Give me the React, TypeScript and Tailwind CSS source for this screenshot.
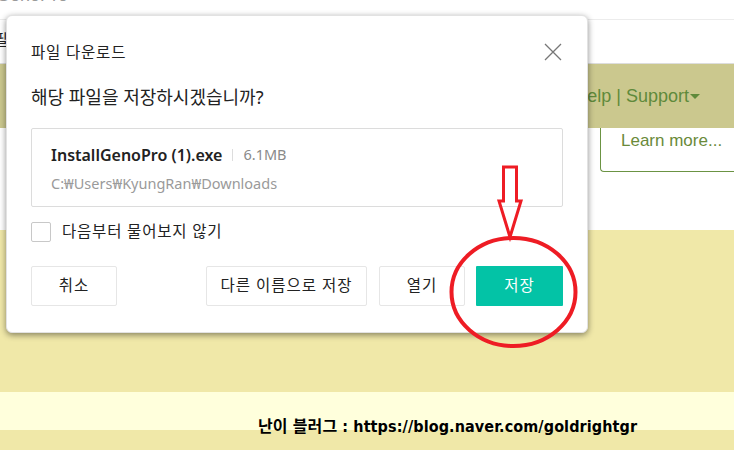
import React from "react";

const kr = { fontFamily: '"Noto Sans", "Noto Sans CJK KR", sans-serif' };

function Annotation() {
  return (
    <svg
      className="absolute left-0 top-0 pointer-events-none"
      width={734}
      height={450}
      viewBox="0 0 734 450"
    >
      <path
        d="M503.5 167 L516.5 167 L516.5 201 L521 201 L510 237 L499 201 L503.5 201 Z"
        fill="none"
        stroke="#ee1c24"
        strokeWidth={3}
        strokeLinejoin="miter"
      />
      <ellipse cx={513.5} cy={292} rx={62} ry={54} fill="none" stroke="#ee1c24" strokeWidth={4} />
    </svg>
  );
}

function DownloadDialog() {
  return (
    <div
      className="absolute left-[6px] top-[15px] w-[582px] h-[318px] bg-white rounded-[6px] border border-[#e2e2e2] shadow-[0_2px_6px_rgba(0,0,0,0.45)] px-[24px] pt-[26px] text-[#222]"
      style={kr}
    >
      <div className="flex items-center justify-between h-[20px]">
        <span className="text-[15.5px] leading-[20px] tracking-[0.8px]">파일 다운로드</span>
        <svg width={18} height={18} viewBox="0 0 18 18" className="mr-[1px]">
          <path d="M1 1 L17 17 M17 1 L1 17" stroke="#777" strokeWidth={1.3} />
        </svg>
      </div>
      <div className="mt-[22px] text-[18px] leading-[26px]">해당 파일을 저장하시겠습니까?</div>
      <div className="mt-[18px] h-[79px] border border-[#dcdcdc] rounded-[2px] px-[19px] pt-[16px]">
        <div className="flex items-center h-[20px]">
          <span className="text-[16px] font-semibold text-[#222]">InstallGenoPro (1).exe</span>
          <span className="mx-[10px] w-px h-[12px] bg-[#dddddd]" />
          <span className="text-[14.5px] text-[#8a8a8a]">6.1MB</span>
        </div>
        <div className="mt-[8px] text-[14.5px] leading-[20px] text-[#9a9a9a]">
          C:₩Users₩KyungRan₩Downloads
        </div>
      </div>
      <div className="mt-[15px] flex items-center h-[20px]">
        <span className="w-[20px] h-[20px] border border-[#c8c8c8] rounded-[2px] bg-white" />
        <span className="ml-[11px] text-[15.5px] tracking-[0.8px]">다음부터 물어보지 않기</span>
      </div>
      <div className="mt-[24px] flex items-center h-[40px] text-[15.5px] tracking-[1px]">
        <button className="w-[86px] h-[40px] border border-[#e6e6e6] rounded-[2px] bg-white">
          취소
        </button>
        <div className="flex-1" />
        <button className="w-[161px] h-[40px] border border-[#e6e6e6] rounded-[2px] bg-white">
          다른 이름으로 저장
        </button>
        <button className="ml-[12px] w-[86px] h-[40px] border border-[#e6e6e6] rounded-[2px] bg-white">
          열기
        </button>
        <button className="ml-[11px] w-[87px] h-[40px] rounded-[1px] bg-[#03c3a6] text-white">
          저장
        </button>
      </div>
    </div>
  );
}

export default function App() {
  return (
    <div className="relative w-[734px] h-[450px] overflow-hidden bg-white" style={{ fontFamily: '"Liberation Sans", Arial, sans-serif' }}>
      <div className="h-[20px] border-b border-[#ececec] overflow-hidden">
        <div className="-mt-[15px] ml-[-4px] text-[18px] leading-[20px] text-[#9a9a9a]">GenoPro</div>
      </div>
      <div className="h-[44px] border-b border-[#dddddd] relative">
        <span className="absolute left-[-6px] top-[8px] text-[15px] text-[#222] underline" style={kr}>
          필
        </span>
      </div>
      <div className="h-[64px] bg-[#cbc88e] flex items-center justify-end pr-[34px]">
        <span className="text-[18px] text-[#5f8a3b] flex items-center">
          elp | Support
          <svg width={10} height={6} viewBox="0 0 10 6" className="ml-[1px] mt-[2px]">
            <path d="M0 0 L10 0 L5 5 Z" fill="#5f8a3b" />
          </svg>
        </span>
      </div>
      <div className="h-[102px] flex justify-end">
        <div className="w-[134px] h-[44px] border-l border-b border-[#6b9343] rounded-bl-[4px] pl-[20px]">
          <span className="text-[17px] text-[#6a8a3a]">Learn more...</span>
        </div>
      </div>
      <div className="h-[162px] bg-[#f0e8a8]" />
      <div className="h-[38px] bg-[#ffffdc] flex items-end pl-[258px]">
        <span
          className="text-[16px] font-bold text-black leading-[18px] -mb-[6px] tracking-[0.1px]"
          style={{ fontFamily: '"DejaVu Sans Condensed", "DejaVu Sans", "Noto Sans CJK KR", sans-serif' }}
        >
          난이 블러그 : https://blog.naver.com/goldrightgr
        </span>
      </div>
      <div className="h-[20px] bg-[#f0e8a8]" />
      <DownloadDialog />
      <Annotation />
    </div>
  );
}
